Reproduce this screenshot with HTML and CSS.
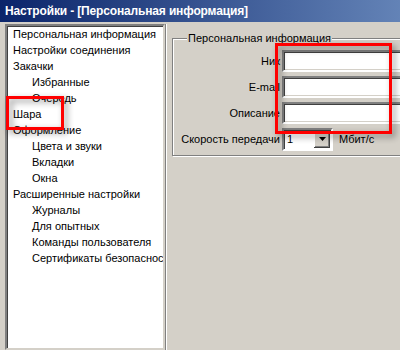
FILE: index.html
```html
<!DOCTYPE html>
<html lang="ru">
<head>
    <meta charset="UTF-8">
    <title>Настройки</title>
    <link rel="stylesheet" href="styles.css">
</head>
<body>
    <div class="window">
        <div class="titlebar">Настройки - [Персональная информация]</div>
        <div class="main">
            <ul class="tree">
                <li>Персональная информация</li>
                <li>Настройки соединения</li>
                <li>Закачки</li>
                <li class="sub">Избранные</li>
                <li class="sub">Очередь</li>
                <li>Шара</li>
                <li>Оформление</li>
                <li class="sub">Цвета и звуки</li>
                <li class="sub">Вкладки</li>
                <li class="sub">Окна</li>
                <li>Расширенные настройки</li>
                <li class="sub">Журналы</li>
                <li class="sub">Для опытных</li>
                <li class="sub">Команды пользователя</li>
                <li class="sub">Сертификаты безопасности</li>
            </ul>
            <div class="page">
                <fieldset class="group">
                    <legend>Персональная информация</legend>
                    <div class="form">
                        <label>Ник</label>
                        <div class="field"></div>
                        <label>E-mail</label>
                        <div class="field"></div>
                        <label>Описание</label>
                        <div class="field"></div>
                        <label>Скорость передачи</label>
                        <div class="speed">
                            <div class="combo">
                                <span class="combo-value">1</span>
                                <span class="combo-btn">
                                    <svg width="7" height="4" viewBox="0 0 7 4"><path d="M0 0h7L3.5 4z" fill="#000"/></svg>
                                </span>
                            </div>
                            <span>Мбит/с</span>
                        </div>
                    </div>
                </fieldset>
            </div>
        </div>
        <!-- red annotation frames -->
        <div class="mark mark-tree"></div>
        <div class="mark mark-fields"></div>
    </div>
</body>
</html>
```

FILE: styles.css
```css
body {
    margin: 0;
    font-family: "Liberation Sans", Arial, sans-serif;
    font-size: 11px;
    color: #000;
    background: #d4d0c8;
}
.window {
    position: relative;
    width: 400px;
    height: 350px;
    overflow: hidden;
    background: #d4d0c8;
}
.titlebar {
    height: 22px;
    line-height: 22px;
    padding-left: 5px;
    color: #fff;
    font-weight: bold;
    font-size: 12px;
    letter-spacing: -0.15px;
    white-space: nowrap;
    background: linear-gradient(to right, #0a246a 0, #a6caf0 700px);
}
.main {
    display: flex;
    height: 326px;
    padding: 2px 0 0 5px;
}
.tree {
    list-style: none;
    margin: 0;
    padding: 0;
    width: 156px;
    flex-shrink: 0;
    background: #fff;
    border: 2px solid;
    border-color: #808080 #d4d0c8 #d4d0c8 #808080;
    box-shadow: inset 1px 1px 0 #404040;
    overflow: hidden;
    white-space: nowrap;
}
.tree li {
    height: 16px;
    line-height: 16px;
    padding-left: 6px;
}
.tree li.sub {
    padding-left: 25px;
}
.page {
    flex: 1;
    padding: 7px 0 0 6px;
    border-left: 1px solid #808080;
    box-shadow: inset 1px 0 0 #fff;
}
.group {
    width: 400px;
    margin: 0;
    padding: 5px 0 5px 7px;
    border: 1px solid #808080;
    box-shadow: inset 1px 1px 0 #fff, 1px 1px 0 #fff;
}
.group legend {
    position: relative;
    padding: 0 1px;
    margin-left: 7px;
    background: #d4d0c8;
    line-height: 14px;
}
.form {
    display: grid;
    grid-template-columns: 100px 1fr;
    grid-auto-rows: 22px;
    row-gap: 4px;
    column-gap: 2px;
    align-items: center;
}
.form label {
    text-align: right;
    white-space: nowrap;
}
.field {
    height: 18px;
    background: #fff;
    border: 2px solid;
    border-color: #808080 #fff #fff #808080;
    box-shadow: inset 1px 1px 0 #404040, inset -1px -1px 0 #d4d0c8;
}
.speed {
    display: flex;
    align-items: center;
    gap: 6px;
}
.combo {
    display: flex;
    width: 45px;
    height: 17px;
    padding: 1px;
    background: #fff;
    border: 2px solid;
    border-color: #808080 #fff #fff #808080;
    box-shadow: inset 1px 1px 0 #404040;
}
.combo-value {
    flex: 1;
    line-height: 17px;
    padding-left: 2px;
}
.combo-btn {
    width: 16px;
    display: flex;
    align-items: center;
    justify-content: center;
    background: #d4d0c8;
    box-shadow: inset -1px -1px 0 #404040, inset 1px 1px 0 #fff, inset -2px -2px 0 #808080;
}
.mark {
    position: absolute;
    border: 3px solid #ff0000;
    filter: drop-shadow(3px 3px 3px rgba(0, 0, 0, 0.45));
}
.mark-tree {
    left: 6px;
    top: 96px;
    width: 52px;
    height: 28px;
}
.mark-fields {
    left: 275px;
    top: 43px;
    width: 111px;
    height: 85px;
}
```
